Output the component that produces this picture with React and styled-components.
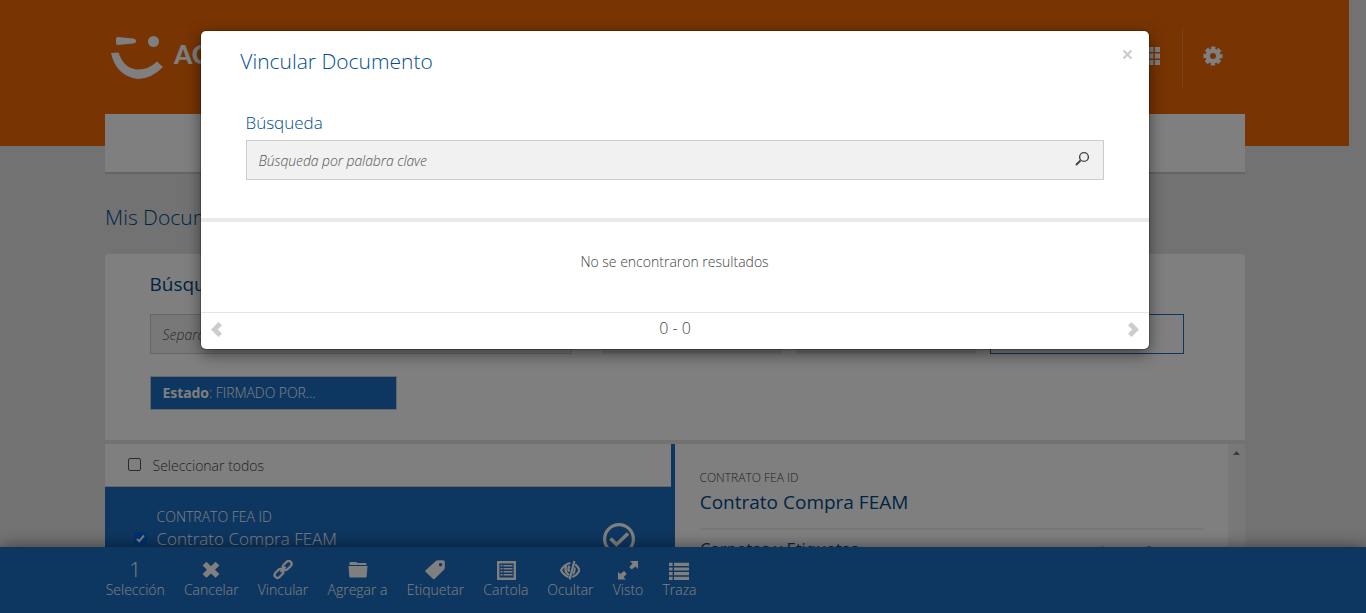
import React from 'react';
import styled, { createGlobalStyle } from 'styled-components';

const blue = '#1b6dc1';

const Global = createGlobalStyle`
  * { box-sizing: border-box; }
  body {
    margin: 0;
    height: 613px;
    overflow: hidden;
    background: #e5e5e5;
    font-family: 'Open Sans', 'Liberation Sans', sans-serif;
    font-weight: 300;
    color: #444;
  }
`;

const Page = styled.div`
  height: 613px;
  overflow: hidden;
  position: relative;
`;
const Banner = styled.header`
  width: 1349px;
  height: 146px;
  background: #f06806;
`;
const Container = styled.div`
  width: 1140px;
  margin-left: 105px;
`;
const Brand = styled.div`
  height: 114px;
  display: flex;
  align-items: flex-start;
  padding: 30px 22px 0 6px;
`;
const BrandName = styled.span`
  margin: 7px auto 0 11px;
  font: 900 26px/34px Lato, sans-serif;
  color: #fff;
`;
const HeaderTools = styled.div`
  display: flex;
  align-items: center;
  height: 54px;
  margin-top: -1px;
`;
const Divider = styled.i`
  width: 1px;
  height: 60px;
  margin: 3px 20px 0 22px;
  background: #f58739;
`;
const NavBar = styled.nav`
  height: 60px;
  background: #fff;
  border-bottom: 2px solid #cbcbcb;
`;
const Body = styled.main`
  margin-top: 56px;
  display: flex;
  flex-direction: column;
`;
const PageTitle = styled.h1`
  margin: 0;
  height: 52px;
  padding-top: 1px;
  font-size: 21px;
  line-height: 28px;
  font-weight: 300;
  color: #00498a;
`;
const SearchCard = styled.section`
  height: 186px;
  background: #fff;
  border-radius: 4px 4px 0 0;
  padding: 16px 45px;
`;
const CardTitle = styled.h2`
  margin: 0 0 16px -0.5px;
  font-size: 19px;
  line-height: 28px;
  font-weight: 400;
  color: #00498a;
`;
const Filters = styled.div`
  display: flex;
`;
const Field = styled.div`
  width: ${p => p.$w}px;
  height: 40px;
  margin-right: ${p => p.$gap || 0}px;
  padding: 0 11.5px;
  border: 1px solid ${p => p.$line || '#ccc'};
  background: ${p => p.$bg || '#f1f1f1'};
  font-size: 14px;
  line-height: 40px;
  font-style: italic;
  color: #555;
`;
const Tag = styled.div`
  width: 247px;
  height: 34px;
  margin-top: 22px;
  padding-left: 11.5px;
  background: ${blue};
  border: 1px solid #ccc;
  color: #fff;
  font-size: 14px;
  line-height: 32px;
  letter-spacing: -0.07px;
  b { font-weight: 700; }
`;
const Results = styled.div`
  display: flex;
  height: 140px;
  margin-top: 4px;
`;
const List = styled.div`
  width: 570px;
  border-right: 4px solid ${blue};
`;
const SelectAll = styled.label`
  display: flex;
  align-items: center;
  gap: 11.5px;
  height: 43px;
  padding: 0 0 2px 23px;
  background: #fff;
  border-bottom: 1px solid #ccc;
  font-size: 14px;
  span { margin-top: 2px; }
`;
const Check = styled.i`
  width: 13px;
  height: 13px;
  flex: none;
  border: 1px solid ${p => (p.$on ? '#0064dc' : '#555')};
  border-radius: 2px;
  background: ${p => (p.$on ? '#0064dc' : '#fff')};
  svg { display: block; }
`;
const Item = styled.div`
  display: flex;
  align-items: flex-start;
  height: 97px;
  padding: 20px 35px 0 29px;
  background: ${blue};
  color: #fff;
  ${Check} { margin: 25px 9.5px 0 0; }
  > svg { margin: 15px 0 0 auto; }
`;
const ItemText = styled.div`
  font-size: 14px;
  line-height: 20px;
  div { font-size: 17px; line-height: 24px; }
`;
const Detail = styled.div`
  width: 553px;
  padding: 24px 24px 0 25px;
  background: #fff;
`;
const DetailType = styled.div`
  font-size: 12px;
  line-height: 20px;
  margin-left: -0.5px;
`;
const DetailName = styled.div`
  font-size: 19px;
  line-height: 28px;
  height: 42px;
  font-weight: 400;
  color: #00498a;
  border-bottom: 2px solid #eee;
  margin-left: -0.3px;
`;
const DetailRow = styled.div`
  display: flex;
  align-items: flex-start;
  padding-top: 7px;
  font-size: 16.7px;
  font-weight: 400;
  line-height: 24px;
  color: #00498a;
  span { margin-right: auto; }
`;
const Marks = styled.svg`
  margin: 1px 2px 0 0;
`;
const ScrollTrack = styled.div`
  width: 17px;
  padding: 7px 0 0 5px;
  background: #f1f1f1;
  svg { display: block; }
`;
const ActionBar = styled.footer`
  position: absolute;
  left: 0;
  right: 0;
  bottom: 0;
  height: 66px;
  padding: 13px 0 0 105.5px;
  display: flex;
  align-items: flex-start;
  background: ${blue};
  box-shadow: 0 0 15px rgba(0, 0, 0, 0.5);
  color: #fff;
`;
const Action = styled.div`
  width: ${p => p.$w}px;
  margin-right: 19px;
  display: flex;
  flex-direction: column;
  align-items: center;
  font-size: 14px;
  line-height: 20px;
  white-space: nowrap;
  svg { height: 20px; flex: none; }
`;
const Count = styled.span`
  height: 20px;
  font-size: 20px;
`;
const Backdrop = styled.div`
  position: absolute;
  inset: 0;
  background: rgba(0, 0, 0, 0.5);
`;
const Modal = styled.div`
  position: absolute;
  left: 201px;
  top: 31px;
  width: 948px;
  height: 318px;
  border-radius: 5px;
  background: #fff;
  box-shadow: 0 0 0 1px rgba(0, 0, 0, 0.2), 0 5px 15px rgba(0, 0, 0, 0.5);
`;
const ModalHeader = styled.div`
  display: flex;
  justify-content: space-between;
  height: 77px;
  padding: 16px 16px 0 39.3px;
  font-size: 21px;
  line-height: 28px;
  color: #004f91;
  svg { margin-top: 2px; }
`;
const ModalSearch = styled.div`
  height: 114px;
  padding: 2px 45px 0;
  border-bottom: 4px solid #e9e9e9;
`;
const Label = styled.div`
  height: 30px;
  margin-left: -0.5px;
  font-size: 17px;
  line-height: 26px;
  color: #004f91;
`;
const Input = styled.div`
  display: flex;
  justify-content: space-between;
  height: 40px;
  padding: 0 13px 0 11.5px;
  border: 1px solid #ccc;
  background: #f1f1f1;
  font-size: 14px;
  line-height: 39px;
  font-style: italic;
  letter-spacing: -0.1px;
  color: #555;
  svg { margin-top: 10px; }
`;
const Empty = styled.div`
  height: 90px;
  padding: 30px 1px 0 0;
  text-align: center;
  font-size: 14px;
  line-height: 20px;
`;
const Pager = styled.div`
  display: flex;
  justify-content: space-between;
  height: 37px;
  padding: 5px 10px 0;
  border-top: 1px solid #e5e5e5;
  font-size: 16px;
  line-height: 21px;
  svg { margin-top: 4px; }
`;

const Arrow = ({ flip }) => (
  <svg width="12" height="15" viewBox="0 0 12 15">
    <path d="M0 7.5 7.5 0 11 3.2 6.8 7.5 11 11.8 7.5 15Z" fill="#ccc" transform={flip ? 'translate(12 0) scale(-1 1)' : undefined} />
  </svg>
);

const icons = {
  cancel: <path d="M1.6 5.6 5.4 1.8 10 6.2 14.6 1.8 18.4 5.6 14 9.8 18.4 14 14.6 17.8 10 13.4 5.4 17.8 1.6 14 6 9.8Z" />,
  link: (
    <g fill="none" stroke="#fff" strokeWidth="2.2">
      <rect x="-5" y="-2.9" width="10" height="5.8" rx="2.9" transform="translate(14.2 5.4) rotate(-45)" />
      <rect x="-5" y="-2.9" width="10" height="5.8" rx="2.9" transform="translate(6 13.4) rotate(-45)" />
      <path d="M7.5 12 12.6 6.8" />
    </g>
  ),
  folder: <path d="M1.5 5V3Q1.5 2 2.5 2H8Q9 2 9.4 3H17.5Q18.5 3 18.5 4V5ZM.5 6H19.5L18.7 16.2Q18.6 17.4 17.5 17.4H2.5Q1.4 17.4 1.3 16.2Z" />,
  tag: <path fillRule="evenodd" d="M.6 10.3 10.6 1.2Q11.5.3 13 .3H18Q19.8.3 19.8 2V7.5Q19.8 8.8 19 9.7L10 18.6Q8.8 19.7 7.6 18.6L.7 12Q-.2 11.2.6 10.3ZM15.5 3A1.7 1.7 0 1 0 15.6 6.4 1.7 1.7 0 0 0 15.5 3Z" />,
  sheet: <path fillRule="evenodd" d="M1 1H20V20H1ZM3.4 3.5V17.5H17.6V3.5ZM4.5 5H6.5V6.5H4.5ZM7.5 5H16.5V6.5H7.5ZM4.5 8H6.5V9.5H4.5ZM7.5 8H16.5V9.5H7.5ZM4.5 11H6.5V12.5H4.5ZM7.5 11H16.5V12.5H7.5ZM4.5 14H6.5V15.5H4.5ZM7.5 14H16.5V15.5H7.5Z" />,
  hide: (
    <g fill="none" stroke="#fff">
      <path strokeWidth="2.2" d="M10.5 3Q4.5 4.2 1 10.2 4 15.6 8.6 17M15.2 4.4Q18 6.6 19.5 10.2 17 15.2 12.4 17" />
      <path strokeWidth="2.2" d="M6.2 5.6Q4.4 9.5 6.8 13.2L9 15M9.6 6Q7.2 9 9.4 11.4" />
      <path strokeWidth="2.2" d="M14.4 1 9.6 19.4" />
      <path strokeWidth="1.8" d="M14.5 7.5Q15.5 10.5 13 14" />
    </g>
  ),
  expand: <path d="M12 1H20V9L17.6 6.6 13.7 9.6 11.3 7.2 14.4 3.4ZM0 19.5V11.8L2.4 14 6 11 8.8 13.8 5.6 17.2 8 19.5Z" />,
  list: <path d="M0 2.7H3.6V6H0ZM5 2.7H20V6H5ZM0 7.4H3.6V10.5H0ZM5 7.4H20V10.5H5ZM0 12H3.6V15.2H0ZM5 12H20V15.2H5ZM0 16.7H3.6V20H0ZM5 16.7H20V20H5Z" />,
};

const actions = [
  ['Cancelar', 'cancel', 54.5],
  ['Vincular', 'link', 51],
  ['Agregar a', 'folder', 60],
  ['Etiquetar', 'tag', 57.8],
  ['Cartola', 'sheet', 45],
  ['Ocultar', 'hide', 46.2],
  ['Visto', 'expand', 31],
  ['Traza', 'list', 34],
];

export default function App() {
  return (
    <Page>
      <Global />
      <Banner>
        <Container>
          <Brand>
            <svg width="52" height="50" viewBox="0 0 52 50" fill="#fff">
              <path d="M5 9Q5 7 7 7L22 8.5Q25 9 25 11 25 13.5 22 13.5L7 15Q5 15 5 13Z" />
              <circle cx="42.5" cy="11.5" r="5.5" />
              <path d="M0 23 7.5 22.5Q13 39 27 39.5 38 39.5 46 31.5L52 37Q40 49 27 49 5 46 0 23Z" />
            </svg>
            <BrandName>ACEPTA</BrandName>
            <HeaderTools>
              <svg width="18" height="18" viewBox="0 0 18 18" fill="#fff">
                <path d="M0 0H5V5H0ZM6.4 0H11.4V5H6.4ZM12.8 0H18V5H12.8ZM0 6.4H5V11.4H0ZM6.4 6.4H11.4V11.4H6.4ZM12.8 6.4H18V11.4H12.8ZM0 13H5V18H0ZM6.4 13H11.4V18H6.4ZM12.8 13H18V18H12.8Z" />
              </svg>
              <Divider />
              <svg width="20" height="20" viewBox="0 0 20 20">
                <circle cx="10" cy="10" r="5.3" fill="none" stroke="#fff" strokeWidth="4.6" />
                <circle cx="10" cy="10" r="8.2" fill="none" stroke="#fff" strokeWidth="2.8" strokeDasharray="4.2 2.24" strokeDashoffset="2.1" />
              </svg>
            </HeaderTools>
          </Brand>
          <NavBar />
        </Container>
      </Banner>
      <Container>
        <Body>
          <PageTitle>Mis Documentos</PageTitle>
          <SearchCard>
            <CardTitle>Búsqueda</CardTitle>
            <Filters>
              <Field $w={422} $gap={30}>Separar por comas</Field>
              <Field $w={180} $gap={14} $line="#e9e9e9" $bg="#e9e9e9" />
              <Field $w={180} $gap={14} $line="#e9e9e9" $bg="#e9e9e9" />
              <Field $w={194} $line={blue} $bg="#fff" />
            </Filters>
            <Tag><b>Estado</b>: FIRMADO POR...</Tag>
          </SearchCard>
          <Results>
            <List>
              <SelectAll><Check /><span>Seleccionar todos</span></SelectAll>
              <Item>
                <Check $on>
                  <svg width="11" height="11" viewBox="0 0 11 11"><path d="M2 6 4.3 8.3 9 2.4" fill="none" stroke="#fff" strokeWidth="2" /></svg>
                </Check>
                <ItemText>CONTRATO FEA ID<div>Contrato Compra FEAM</div></ItemText>
                <svg width="34" height="34" viewBox="0 0 34 34" fill="none" stroke="#fff">
                  <circle cx="17" cy="17" r="14.4" strokeWidth="3.2" />
                  <path d="M8.5 16.5 14.5 22.5 26 11.5" strokeWidth="3.6" />
                </svg>
              </Item>
            </List>
            <Detail>
              <DetailType>CONTRATO FEA ID</DetailType>
              <DetailName>Contrato Compra FEAM</DetailName>
              <DetailRow>
                <span>Carpetas y Etiquetas</span>
                <Marks width="103" height="12" viewBox="0 0 103 12">
                  <path d="M3.5 8.5V12" stroke="#333" />
                  <circle cx="50" cy="11.5" r="3.2" fill={blue} />
                </Marks>
              </DetailRow>
            </Detail>
            <ScrollTrack>
              <svg width="7" height="4" viewBox="0 0 7 4"><path d="M0 4 3.5 0 7 4Z" fill="#777" /></svg>
            </ScrollTrack>
          </Results>
        </Body>
      </Container>
      <ActionBar>
        <Action $w={59.5}><Count>1</Count>Selección</Action>
        {actions.map(([label, icon, w]) => (
          <Action key={label} $w={w}>
            <svg width="20" height="20" viewBox="0 0 20 20" fill="#fff">{icons[icon]}</svg>
            {label}
          </Action>
        ))}
      </ActionBar>
      <Backdrop />
      <Modal>
        <ModalHeader>
          Vincular Documento
          <svg width="11" height="11" viewBox="0 0 11 11"><path d="M1.5 1.5 9.5 9.5M9.5 1.5 1.5 9.5" stroke="#ccc" strokeWidth="2.2" /></svg>
        </ModalHeader>
        <ModalSearch>
          <Label>Búsqueda</Label>
          <Input>
            Búsqueda por palabra clave
            <svg width="16" height="16" viewBox="0 0 16 16" fill="none" stroke="#444">
              <circle cx="10" cy="6" r="4.4" strokeWidth="1.4" />
              <path d="M6.5 9.5 2 14" strokeWidth="2" />
            </svg>
          </Input>
        </ModalSearch>
        <Empty>No se encontraron resultados</Empty>
        <Pager><Arrow />0 - 0<Arrow flip /></Pager>
      </Modal>
    </Page>
  );
}
